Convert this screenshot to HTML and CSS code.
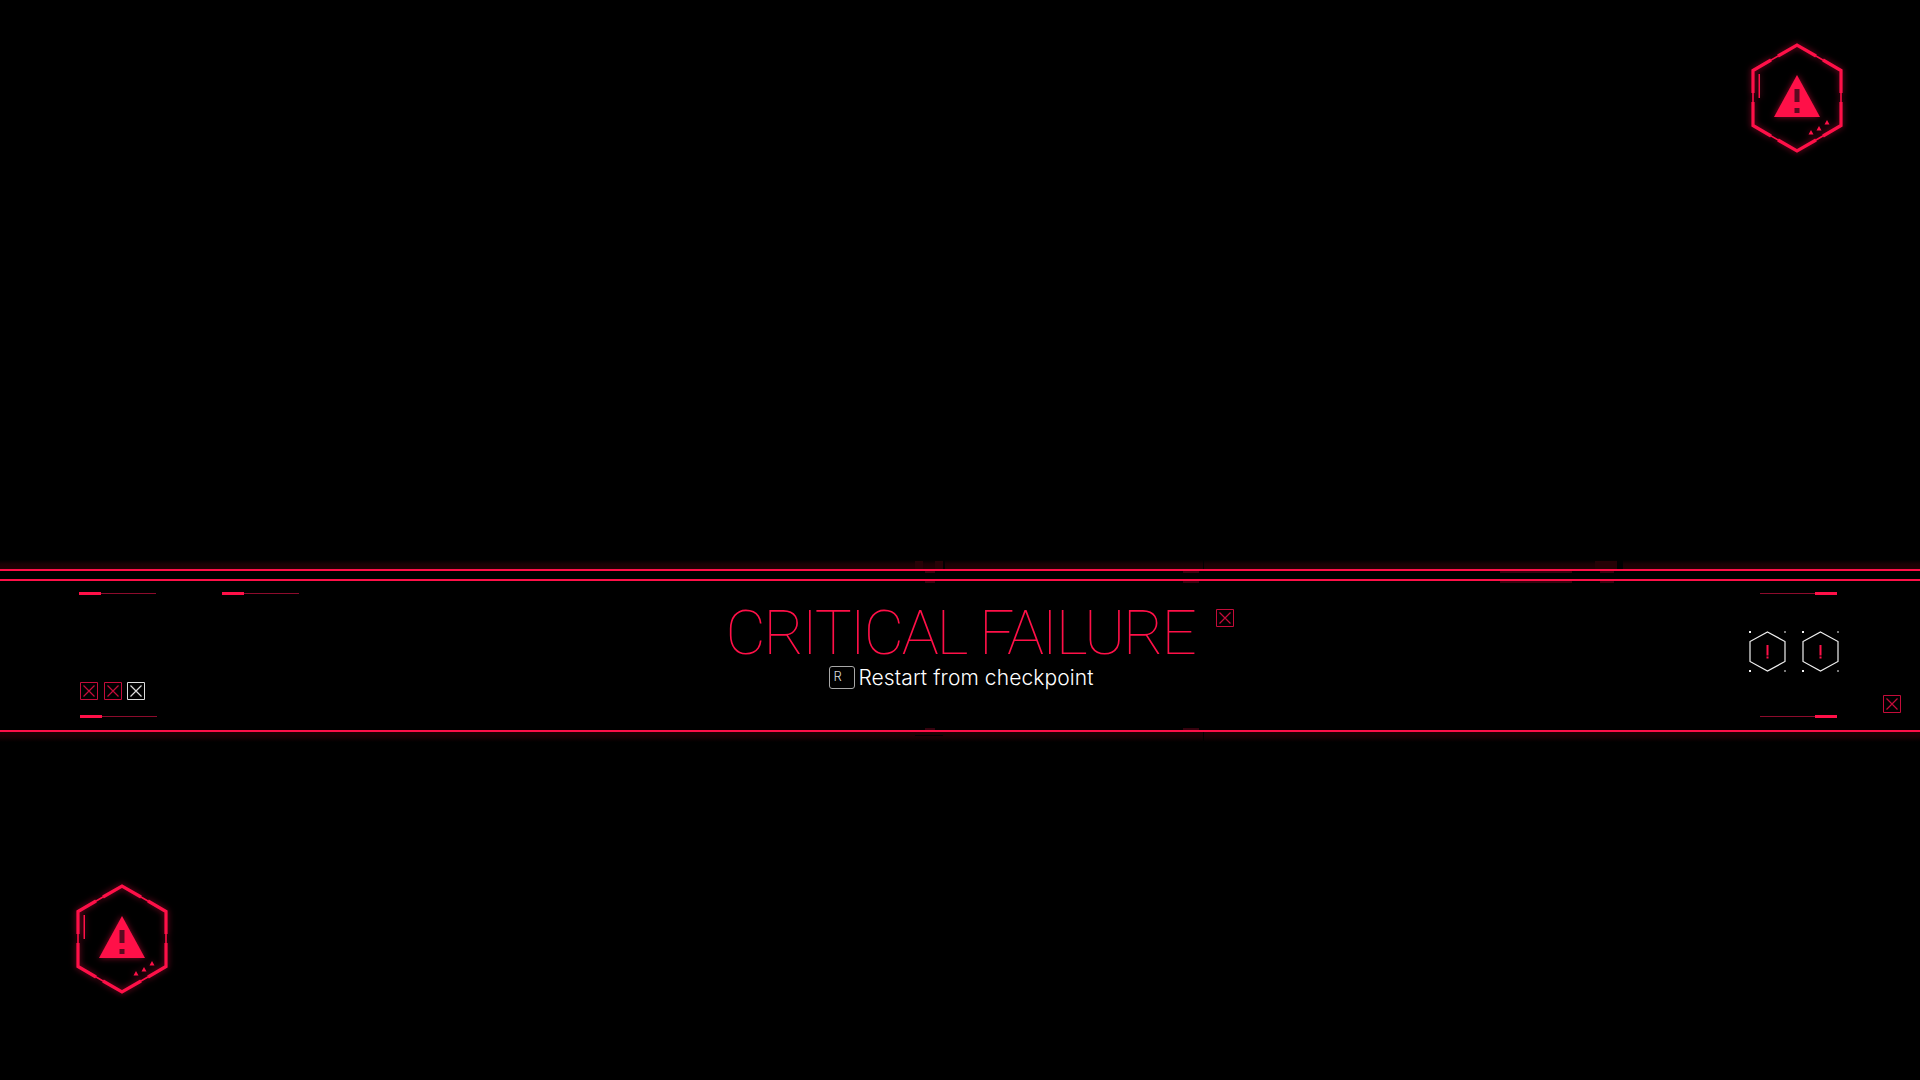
FILE: index.html
```html
<!DOCTYPE html>
<html>
  <head>
    <meta charset="UTF-8" />
    <title>Critical Failure</title>
    <link rel="stylesheet" href="styles.css">
  </head>
  <body>
    <svg class="defs" width="0" height="0">
      <symbol id="alert" viewBox="0 0 92 110">
        <!-- thin hexagon underneath, thick plates on top of it -->
        <path d="M46 2 90 27.500V82.500L46 108 2 82.500V27.500Z" fill="none" stroke="currentColor" stroke-width="1.600"/>
        <path d="M27 13 46 2 65 13M72 17 90 27.500V50M90 59V82.500L72 93M65 97 46 108 27 97M20 93 2 82.500V59M2 50V27.500L20 17" fill="none" stroke="currentColor" stroke-width="3.200"/>
        <path d="M8.250 31V55" stroke="currentColor" stroke-width="1.500"/>
        <path d="M46 32 69 74H23Z" fill="currentColor"/>
        <path d="M43.500 46H48.500V59H43.500ZM43.500 65H48.500V70H43.500Z" fill="#5c0a20"/>
        <path d="M57.500 91.500 60 87 62.500 91.500ZM65.500 87.500 68 83 70.500 87.500ZM73.500 81.500 76 77 78.500 81.500Z" fill="currentColor"/>
      </symbol>
      <symbol id="crossbox" viewBox="0 0 18 18">
        <path d="M.5.5H17.500V17.500H.5Z" fill="none" stroke="currentColor"/>
        <path d="M3.500 3.500 14.500 14.500M14.500 3.500 3.500 14.500" fill="none" stroke="currentColor" stroke-width="1.200"/>
      </symbol>
      <symbol id="hexwarn" viewBox="0 0 37 41">
        <path d="M18.500 1 36 10.500V30.500L18.500 40 1 30.500V10.500Z" fill="none" stroke="#f0f0f0" stroke-width="1.200"/>
        <path d="M17.500 14H19.500V24.500H17.500ZM17.500 25.500H19.500V27.500H17.500Z" fill="#ff1048"/>
        <path d="M0 0H2V2H0ZM35.500 0H36.500V2H35.500ZM0 39H2V41H0ZM35.500 39H36.500V41H35.500Z" fill="#f0f0f0"/>
      </symbol>
    </svg>

    <div class="screen">
      <div class="top">
        <svg class="alert"><use href="#alert"/></svg>
      </div>

      <div class="band">
        <div class="band-inner">
          <div class="side side-left">
            <div class="ticks">
              <div class="tick"></div>
              <div class="tick"></div>
            </div>
            <div class="side-foot">
              <div class="boxes">
                <svg class="crossbox"><use href="#crossbox"/></svg>
                <svg class="crossbox"><use href="#crossbox"/></svg>
                <svg class="crossbox white"><use href="#crossbox"/></svg>
              </div>
              <div class="tick"></div>
            </div>
          </div>

          <div class="center">
            <div class="title-row">
              <h1 class="title">CRITICAL FAILURE</h1>
              <svg class="crossbox title-box"><use href="#crossbox"/></svg>
            </div>
            <div class="prompt">
              <span class="key">R</span>
              <span class="prompt-text">Restart from checkpoint</span>
            </div>
          </div>

          <div class="side side-right">
            <div class="tick flip"></div>
            <div class="hexes">
              <svg class="hexwarn"><use href="#hexwarn"/></svg>
              <svg class="hexwarn"><use href="#hexwarn"/></svg>
            </div>
            <div class="tick flip"></div>
            <svg class="crossbox far-box"><use href="#crossbox"/></svg>
          </div>
        </div>
      </div>

      <div class="bottom">
        <svg class="alert"><use href="#alert"/></svg>
      </div>
    </div>
  </body>
</html>
```

FILE: styles.css
```css
html, body {
  margin: 0;
  background-color: black;
}
.defs {
  display: block;
  height: 0;
}
.screen {
  display: flex;
  flex-direction: column;
  width: 1920px;
  height: 1080px;
  overflow: hidden;
  color: #ff1048;
  font-family: "Inter", "Liberation Sans", sans-serif;
}
.top {
  display: flex;
  justify-content: flex-end;
  height: 569px;
  box-sizing: border-box;
  padding: 43px 77px 0 0;
  /* glow above the band, with its few broken patches */
  background:
    linear-gradient(#000, #000) no-repeat 444px 9px / 146px 2px,
    linear-gradient(#000, #000) no-repeat 943px 100% / 2px 9px,
    linear-gradient(#000, #000) no-repeat 1203px 100% / 1px 9px,
    linear-gradient(#000, #000) no-repeat 1617px 100% / 6px 9px,
    linear-gradient(#280106, #280106) no-repeat 915px 100% / 8px 8px,
    linear-gradient(#280106, #280106) no-repeat 935px 100% / 8px 8px,
    linear-gradient(#260105, #260105) no-repeat 1595px 100% / 22px 8px,
    linear-gradient(to top, #220004 0, #1a0003 5px, #000 9px) no-repeat bottom / 100% 10px;
}
.alert {
  width: 92px;
  height: 110px;
  filter: drop-shadow(0 0 3px rgba(255, 16, 72, .55));
}
.band {
  border-top: 2px solid #ff1048;
  border-bottom: 2px solid #ff1048;
  height: 159px;
  box-sizing: content-box;
  background:
    linear-gradient(#36020e, #36020e) no-repeat 925px 0 / 10px 2px,
    linear-gradient(#36020e, #36020e) no-repeat 1183px 0 / 16px 2px,
    linear-gradient(#36020e, #36020e) no-repeat 1500px 0 / 72px 2px,
    linear-gradient(#36020e, #36020e) no-repeat 1600px 0 / 14px 2px;
}
.band-inner {
  display: flex;
  justify-content: space-between;
  height: 149px;
  margin-top: 8px;
  border-top: 2px solid #ff1048;
  background:
    linear-gradient(#36020e, #36020e) no-repeat 925px 0 / 10px 2px,
    linear-gradient(#36020e, #36020e) no-repeat 1183px 0 / 16px 2px,
    linear-gradient(#36020e, #36020e) no-repeat 1500px 0 / 72px 2px,
    linear-gradient(#36020e, #36020e) no-repeat 1600px 0 / 14px 2px,
    linear-gradient(#36020e, #36020e) no-repeat 925px 100% / 10px 2px,
    linear-gradient(#36020e, #36020e) no-repeat 1183px 100% / 16px 2px;
}
.side {
  width: 360px;
  box-sizing: border-box;
}

/* thin line with the thick bit at one end */
.tick {
  width: 77px;
  height: 1px;
  margin: 1px 0;
  background-color: #8c0b2c;
  position: relative;
}
.tick:before {
  content: "";
  position: absolute;
  left: 0;
  top: -1px;
  width: 22px;
  height: 3px;
  background-color: #ff1048;
}
.tick.flip:before {
  left: auto;
  right: 0;
}

.side-left {
  display: flex;
  flex-direction: column;
  justify-content: space-between;
  padding: 11px 0 12px 79px;
}
.ticks {
  display: flex;
  gap: 66px;
}
.side-foot {
  margin-left: 1px;
}
.boxes {
  display: flex;
  gap: 6px;
  margin-bottom: 16px;
}
.crossbox {
  display: block;
  width: 18px;
  height: 18px;
  color: #c40c3a;
  flex: none;
}
.crossbox.white {
  color: #dcdcdc;
  margin-left: -1px;
}

.center {
  display: flex;
  flex-direction: column;
  align-items: center;
  padding-top: 20px;
}
.title-row {
  display: flex;
  align-items: flex-start;
  gap: 21px;
  margin-left: 39px;
}
.title {
  margin: 0;
  font-family: "Roboto", "Liberation Sans", sans-serif;
  font-size: 62px;
  line-height: 63px;
  font-weight: 100;
  letter-spacing: -2.200px;
  white-space: nowrap;
}
.title-box {
  margin-top: 8px;
}
.prompt {
  display: flex;
  align-items: center;
  gap: 3px;
  margin-top: 1px;
  margin-left: 3px;
  color: #fff;
}
.key {
  width: 26px;
  height: 23px;
  box-sizing: border-box;
  border: 1px solid #a8a8a8;
  border-radius: 3px;
  padding: 2px 0 0 3px;
  font-size: 13px;
  line-height: 14px;
  font-weight: 300;
  color: #d8d8d8;
}
.prompt-text {
  font-size: 21px;
  line-height: 25px;
  font-weight: 300;
  letter-spacing: .1px;
}

.side-right {
  display: flex;
  flex-direction: column;
  align-items: flex-start;
  padding: 11px 0 0 200px;
  position: relative;
}
.hexes {
  display: flex;
  gap: 16px;
  margin: 36px 0 43px -11px;
}
.hexwarn {
  width: 37px;
  height: 41px;
  display: block;
}
.far-box {
  position: absolute;
  left: 323px;
  top: 114px;
}

.bottom {
  flex: 1;
  padding: 152px 0 0 76px;
  background:
    linear-gradient(#000, #000) no-repeat 915px 3px / 28px 1px,
    linear-gradient(#000, #000) no-repeat 1203px 0 / 1px 9px,
    linear-gradient(to bottom, #220004 0, #1a0003 5px, #000 10px) no-repeat top / 100% 10px;
}
```
